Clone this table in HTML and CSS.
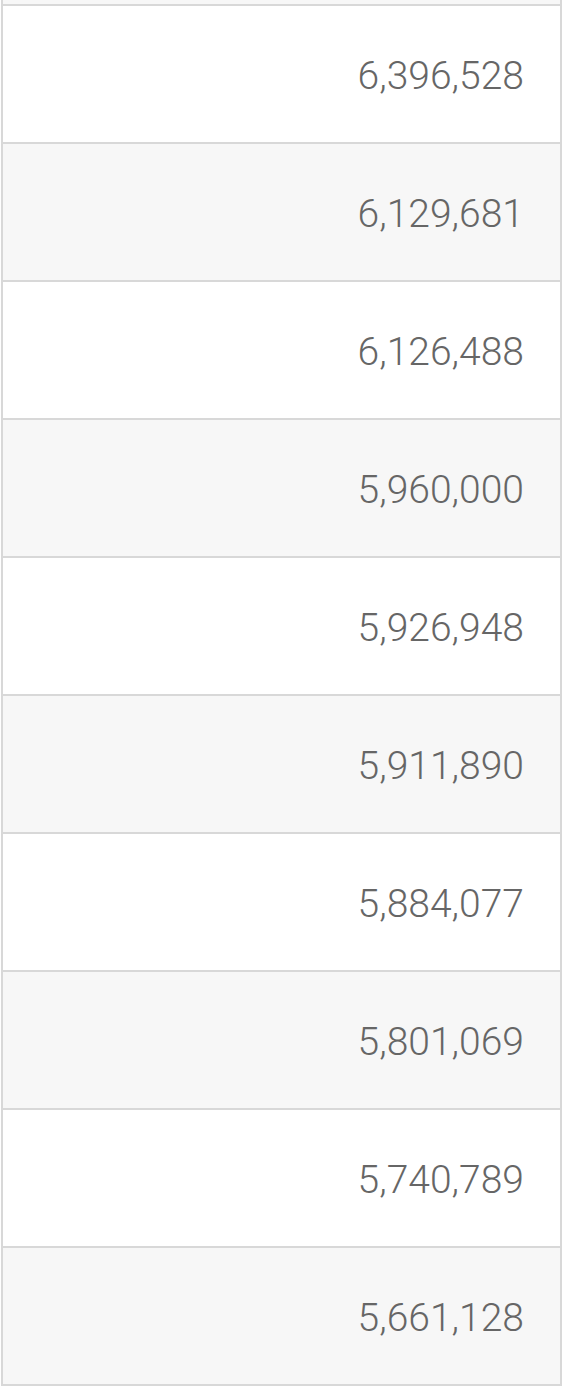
FILE: index.html
```html
<!DOCTYPE html>
<html>
<head>
<meta charset="utf-8">
<link rel="stylesheet" href="styles.css">
</head>
<body>
<div class="table">
  <div class="row partial"></div>
  <div class="row"><span class="num">6,396,528</span></div>
  <div class="row alt"><span class="num">6,129,681</span></div>
  <div class="row"><span class="num">6,126,488</span></div>
  <div class="row alt"><span class="num">5,960,000</span></div>
  <div class="row"><span class="num">5,926,948</span></div>
  <div class="row alt"><span class="num">5,911,890</span></div>
  <div class="row"><span class="num">5,884,077</span></div>
  <div class="row alt"><span class="num">5,801,069</span></div>
  <div class="row"><span class="num">5,740,789</span></div>
  <div class="row alt last"><span class="num">5,661,128</span></div>
</div>
</body>
</html>
```
FILE: styles.css
```css
html, body {
  margin: 0;
  padding: 0;
  background: #fff;
}
.table {
  margin-left: 1px;
  width: 561px;
  box-sizing: border-box;
  border-left: 2px solid #d8d8d8;
  border-right: 2px solid #d8d8d8;
  font-family: Roboto, "Noto Sans", sans-serif;
}
.row {
  height: 136px;
  box-sizing: content-box;
  border-top: 2px solid #d8d8d8;
  display: flex;
  align-items: center;
  justify-content: flex-end;
  padding-right: 36px;
  background: #fff;
}
.row.alt {
  background: #f7f7f7;
}
.row.partial {
  height: 4px;
  border-top: none;
  background: #f7f7f7;
}
.row.last {
  border-bottom: 2px solid #d8d8d8;
}
.num {
  font-size: 39px;
  font-weight: 300;
  color: #666;
  line-height: 1;
  padding-top: 5px;
}
```
